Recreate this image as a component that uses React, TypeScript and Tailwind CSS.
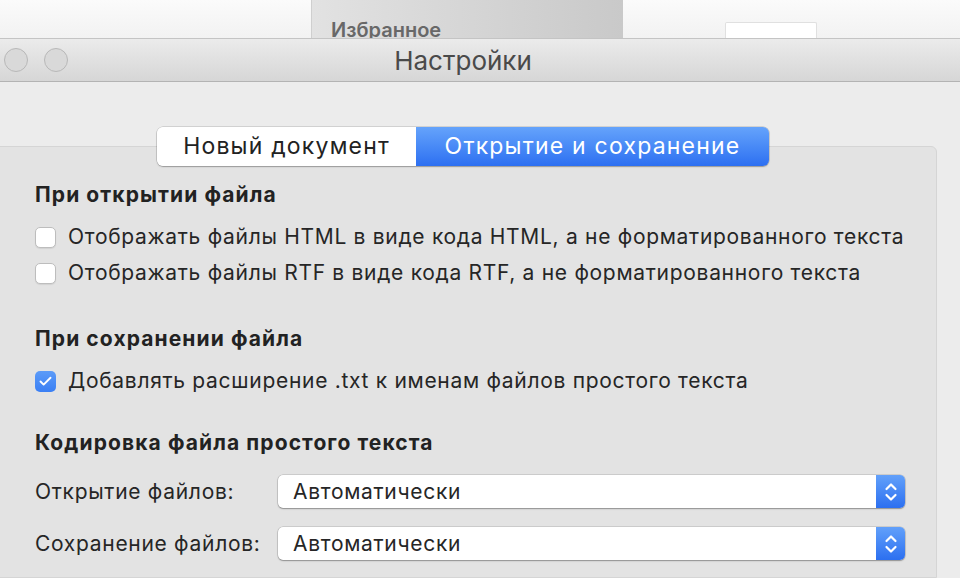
import { Check } from "lucide-react"

const font = { fontFamily: "Inter, 'Noto Sans', sans-serif" }

function Checkbox({ checked }: { checked?: boolean }) {
  if (checked) {
    return (
      <div className="w-[21px] h-[21px] rounded-[5px] bg-gradient-to-b from-[#5c9bf8] to-[#3a7ff4] flex items-center justify-center shrink-0">
        <Check size={15} strokeWidth={3} className="text-white" />
      </div>
    )
  }
  return (
    <div className="w-[21px] h-[21px] rounded-[5px] bg-white border border-[#bdbdbd] shadow-[0_1px_1px_rgba(0,0,0,0.08)] shrink-0" />
  )
}

function Row({ checked, label }: { checked?: boolean; label: string }) {
  return (
    <div className="h-[36px] flex items-center gap-[12px]">
      <Checkbox checked={checked} />
      <span className="text-[21px] tracking-[0.7px] text-[#262626] whitespace-nowrap">{label}</span>
    </div>
  )
}

function Heading({ children, className }: { children: string; className?: string }) {
  return (
    <div className={"h-[26px] flex items-center text-[21px] tracking-[1.1px] font-bold text-[#222] whitespace-nowrap " + (className ?? "")}>
      {children}
    </div>
  )
}

function Popup({ label, value }: { label: string; value: string }) {
  return (
    <div className="h-[33px] flex items-center">
      <span className="w-[243px] text-[21px] tracking-[0.7px] text-[#262626] whitespace-nowrap">{label}</span>
      <div className="w-[627px] h-[33px] flex rounded-[5px] bg-white shadow-[0_0_0_0.5px_rgba(0,0,0,0.2),0_1px_1.5px_rgba(0,0,0,0.3)] overflow-hidden">
        <span className="flex-1 pl-[15px] text-[21px] tracking-[0.7px] leading-[33px] text-[#262626]">{value}</span>
        <div className="w-[29px] h-full bg-gradient-to-b from-[#62a0fa] to-[#2c6ff0] flex items-center justify-center">
          <svg width="14" height="22" viewBox="0 0 14 22" fill="none" stroke="white" strokeWidth="2.2" strokeLinecap="round" strokeLinejoin="round">
            <path d="M2.5 8 L7 3.5 L11.5 8" />
            <path d="M2.5 14 L7 18.5 L11.5 14" />
          </svg>
        </div>
      </div>
    </div>
  )
}

export default function App() {
  return (
    <div className="w-[960px] h-[578px] overflow-hidden bg-[#ececec] flex flex-col" style={font}>
      {/* window behind */}
      <div className="h-[38px] shrink-0 bg-gradient-to-b from-[#fbfbfb] to-[#f2f2f2] flex items-end">
        <div className="ml-[311px] w-[312px] h-full border-l border-[#cfcfcf] bg-gradient-to-r from-[#e2e2e2] to-[#c9c9c9] flex items-end">
          <span className="ml-[19px] text-[20px] font-semibold leading-[22px] text-[#686868] -mb-[3px] whitespace-nowrap">Избранное</span>
        </div>
        <div className="ml-[102px] w-[92px] h-[16px] bg-white border border-b-0 border-[#e0e0e0] rounded-t-[2px]" />
      </div>

      {/* title bar */}
      <div className="h-[44px] shrink-0 border-t border-b border-t-[#c4c4c4] border-b-[#b3b3b3] bg-gradient-to-b from-[#ebebeb] to-[#d6d6d6] flex items-center">
        <div className="flex items-center gap-[16px] pl-[4px]">
          <div className="w-[24px] h-[24px] rounded-full border border-[#b8b8b8] bg-[#d9d9d9]" />
          <div className="w-[24px] h-[24px] rounded-full border border-[#b8b8b8] bg-[#d9d9d9]" />
        </div>
        <div className="flex-1 text-center pr-[102px] text-[26px] text-[#4a4a4a]">Настройки</div>
      </div>

      {/* content */}
      <div className="pt-[45px] flex-1 flex flex-col">
        <div className="ml-[157px] flex h-[39px] relative z-10 w-fit rounded-[6px] shadow-[0_0_0_0.5px_rgba(0,0,0,0.22),0_1px_1.5px_rgba(0,0,0,0.25)] overflow-hidden">
          <div className="w-[259px] bg-white flex items-center justify-center text-[23px] tracking-[1.2px] text-[#222]">Новый документ</div>
          <div className="w-[353px] bg-gradient-to-b from-[#65a3fb] to-[#2d6ff1] flex items-center justify-center text-[23px] tracking-[1.2px] text-white">Открытие и сохранение</div>
        </div>
        <div className="-mt-[20px] -ml-[1px] w-[938px] flex-1 bg-[#e3e3e3] border border-[#d5d5d5] rounded-tr-[6px] pt-[35px] pl-[35px]">
          <Heading>При открытии файла</Heading>
          <div className="mt-[11px]">
            <Row label="Отображать файлы HTML в виде кода HTML, а не форматированного текста" />
            <Row label="Отображать файлы RTF в виде кода RTF, а не форматированного текста" />
          </div>
          <Heading className="mt-[35px]">При сохранении файла</Heading>
          <div className="mt-[11px]">
            <Row checked label="Добавлять расширение .txt к именам файлов простого текста" />
          </div>
          <Heading className="mt-[31px]">Кодировка файла простого текста</Heading>
          <div className="mt-[19px]">
            <Popup label="Открытие файлов:" value="Автоматически" />
          </div>
          <div className="mt-[19px]">
            <Popup label="Сохранение файлов:" value="Автоматически" />
          </div>
        </div>
      </div>
    </div>
  )
}
